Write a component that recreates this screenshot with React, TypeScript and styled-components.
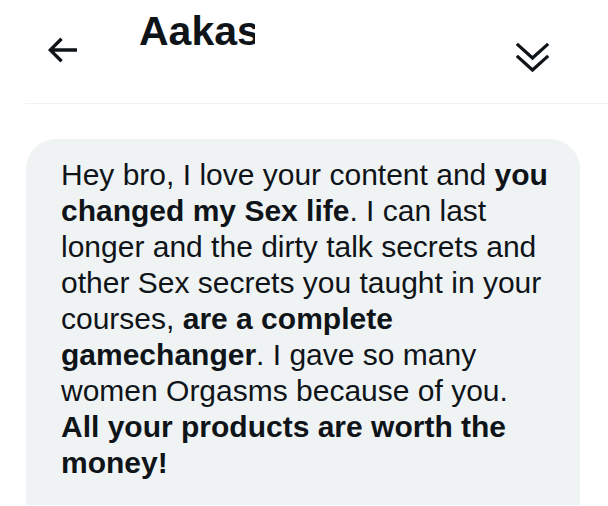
import React from "react";
import styled, { createGlobalStyle } from "styled-components";

const Global = createGlobalStyle`
  html, body { margin: 0; padding: 0; background: #ffffff; overflow: hidden; }
  body { font-family: "Liberation Sans", Arial, sans-serif; color: #0f1419; }
`;

const Page = styled.div`
  width: 608px;
  height: 506px;
  overflow: hidden;
  background: #ffffff;
`;

const Header = styled.header`
  display: flex;
  align-items: flex-start;
  height: 104px;
  margin-left: 25px;
  border-bottom: 1px solid #eff3f4;
  box-sizing: border-box;
`;

const IconButton = styled.div<{ $top: number; $left?: number; $right?: number }>`
  width: 40px;
  height: 40px;
  flex: none;
  margin-top: ${(p) => p.$top}px;
  margin-left: ${(p) => (p.$left === undefined ? "auto" : `${p.$left}px`)};
  margin-right: ${(p) => p.$right ?? 0}px;
  color: #0f1419;
  svg { display: block; width: 40px; height: 40px; }
`;

const Title = styled.h1`
  margin: 11px 0 0 57px;
  width: 116px;
  overflow: hidden;
  white-space: nowrap;
  font-size: 41px;
  line-height: 41px;
  font-weight: 700;
  color: #0f1419;
  letter-spacing: 0;
`;

const Bubble = styled.div`
  margin: 35px 28px 0 26px;
  height: 366px;
  box-sizing: border-box;
  padding: 18px 24px 0 35px;
  background: #eff3f4;
  border-radius: 30px 30px 0 0;
  font-size: 30px;
  line-height: 36px;
  color: #0f1419;
  b { font-weight: 700; }
`;

export default function App() {
  return (
    <Page>
      <Global />
      <Header>
        <IconButton $top={30} $left={17}>
          <svg viewBox="0 0 24 24" fill="currentColor">
            <path d="M7.414 13l5.043 5.04-1.414 1.42L3.586 12l7.457-7.46 1.414 1.42L7.414 11H21v2H7.414z" />
          </svg>
        </IconButton>
        <Title>Aakas</Title>
        <IconButton $top={37} $right={55}>
          <svg viewBox="0 0 40 40" fill="none" stroke="currentColor" strokeWidth="3.2" strokeLinecap="square">
            <path d="M5 8 L19.5 21 L34 8" />
            <path d="M5 20 L19.5 33 L34 20" />
          </svg>
        </IconButton>
      </Header>
      <Bubble>
        Hey bro, I love your content and <b>you changed my Sex life</b>. I can last longer and the dirty talk
        secrets and other Sex secrets you taught in your courses, <b>are a complete gamechanger</b>. I gave so
        many women Orgasms because of you.
        <br />
        <b>All your products are worth the money!</b>
      </Bubble>
    </Page>
  );
}
